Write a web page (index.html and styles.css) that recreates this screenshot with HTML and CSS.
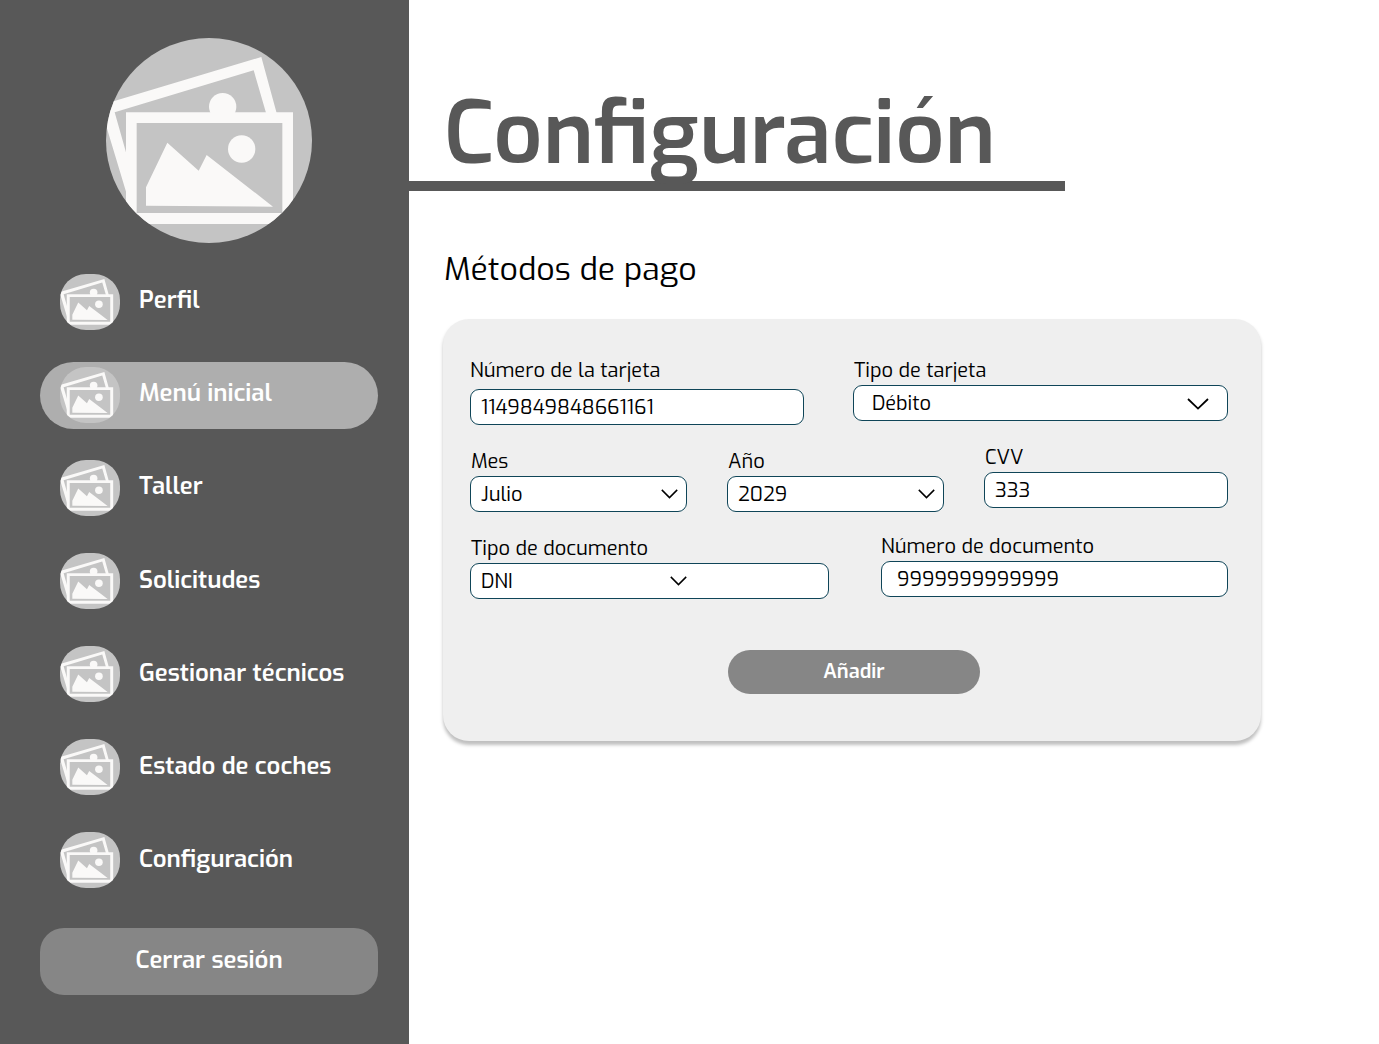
FILE: index.html
```html
<!DOCTYPE html>
<html lang="es">
<head>
<meta charset="utf-8">
<title>Configuración</title>
<link rel="stylesheet" href="styles.css">
</head>
<body>
<svg class="defs" aria-hidden="true">
  <symbol id="photo" viewBox="0 0 700 700" overflow="visible">
    <path class="paper" fill-rule="evenodd" d="M30 241 L514 96 L608 440 L130 573 Z M74 262 L150 530 L575 425 L491 136 Z"/>
    <circle class="paper" cx="398" cy="245" r="41"/>
    <path class="paper" d="M108 262H609V597H108Z"/>
    <path class="sky" d="M140 294H577V564H140Z"/>
    <circle class="paper" cx="455" cy="372" r="41"/>
    <path class="paper" d="M168 487L232 353L326 437L350 390L549 545L168 542Z"/>
  </symbol>
</svg>
<div class="page">
  <aside class="sidebar">
    <svg class="avatar" viewBox="48 39 618 615" preserveAspectRatio="none"><use href="#photo" width="700" height="700"/></svg>
    <nav class="menu">
      <a class="item"><svg class="icon" viewBox="35 42 653 611" preserveAspectRatio="none"><use href="#photo" width="700" height="700"/></svg><span>Perfil</span></a>
      <a class="item active"><svg class="icon" viewBox="35 42 653 611" preserveAspectRatio="none"><use href="#photo" width="700" height="700"/></svg><span>Menú inicial</span></a>
      <a class="item"><svg class="icon" viewBox="35 42 653 611" preserveAspectRatio="none"><use href="#photo" width="700" height="700"/></svg><span>Taller</span></a>
      <a class="item"><svg class="icon" viewBox="35 42 653 611" preserveAspectRatio="none"><use href="#photo" width="700" height="700"/></svg><span>Solicitudes</span></a>
      <a class="item"><svg class="icon" viewBox="35 42 653 611" preserveAspectRatio="none"><use href="#photo" width="700" height="700"/></svg><span>Gestionar técnicos</span></a>
      <a class="item"><svg class="icon" viewBox="35 42 653 611" preserveAspectRatio="none"><use href="#photo" width="700" height="700"/></svg><span>Estado de coches</span></a>
      <a class="item"><svg class="icon" viewBox="35 42 653 611" preserveAspectRatio="none"><use href="#photo" width="700" height="700"/></svg><span>Configuración</span></a>
    </nav>
    <button class="logout"><span>Cerrar sesión</span></button>
  </aside>
  <main class="content">
    <h1 class="title">Configuración</h1>
    <h2 class="subtitle">Métodos de pago</h2>
    <form class="card">
      <div class="row row-card">
        <div class="field number"><label>Número de la tarjeta</label><div class="box"><span>1149849848661161</span></div></div>
        <div class="field type"><label>Tipo de tarjeta</label><div class="box"><span>Débito</span><svg class="chevron large" viewBox="0 0 22 12"><path d="M1 1L11 10.6L21 1"/></svg></div></div>
      </div>
      <div class="row row-date">
        <div class="field month"><label>Mes</label><div class="box"><span>Julio</span><svg class="chevron" viewBox="0 0 17 10"><path d="M.8 .9L8.5 8.6L16.2 .9"/></svg></div></div>
        <div class="field year"><label>Año</label><div class="box"><span>2029</span><svg class="chevron" viewBox="0 0 17 10"><path d="M.8 .9L8.5 8.6L16.2 .9"/></svg></div></div>
        <div class="field cvv"><label>CVV</label><div class="box"><span>333</span></div></div>
      </div>
      <div class="row row-doc">
        <div class="field doctype"><label>Tipo de documento</label><div class="box"><span>DNI</span><svg class="chevron" viewBox="0 0 17 10"><path d="M.8 .9L8.5 8.6L16.2 .9"/></svg></div></div>
        <div class="field docnum"><label>Número de documento</label><div class="box"><span>9999999999999</span></div></div>
      </div>
      <button type="button" class="add"><span>Añadir</span></button>
    </form>
  </main>
</div>
</body>
</html>
```
FILE: styles.css
```css
* { box-sizing: border-box; }
body { margin: 0; background: #fff; color: #000; font-family: Exo, "Exo 2", Roboto, sans-serif; }
.defs { display: block; width: 0; height: 0; }
.paper { fill: #faf9f8; }
.sky { fill: #c4c4c4; }
.page { display: flex; height: 1044px; overflow: hidden; }

.sidebar { width: 409px; background: #585858; padding: 38px 31px 0 40px; display: flex; flex-direction: column; }
.avatar { display: block; width: 206px; height: 205px; margin-left: 66px; border-radius: 50%; background: #c4c4c4; }
.menu { display: flex; flex-direction: column; gap: 26px; margin-top: 26px; }
.item { display: flex; align-items: flex-start; height: 67px; padding: 5px 0 0 19.5px; border-radius: 33.5px; color: #fff; font-size: 24px; font-weight: 600; line-height: 28px; }
.item.active { background: #aeaeae; }
.item span { margin: 12px 0 0 19px; white-space: nowrap; }
.item:nth-child(n+4) span { margin-top: 13px; }
.icon { width: 60.5px; height: 56px; border-radius: 26px; background: #c4c4c4; flex: none; }
.logout { height: 67px; margin-top: 34px; padding: 0 0 3px; border: 0; border-radius: 24px; background: #868686; color: #fff; font: 600 24px/28px Exo, "Exo 2", Roboto, sans-serif; }

.content { flex: 1; min-width: 0; }
.title { margin: 0; width: 656px; height: 191px; padding: 82px 0 0 35px; border-bottom: 10px solid #585858; color: #585858; font-size: 86px; font-weight: 600; line-height: 104px; white-space: nowrap; }
.subtitle { margin: 58px 0 0 35px; font-size: 32px; font-weight: 400; line-height: 40px; }
.card { width: 818px; height: 422px; margin: 30px 0 0 34.4px; padding: 40px 33.4px 0 26.6px; border-radius: 26px; background: #efefef; box-shadow: 0 3.5px 3.5px rgba(0, 0, 0, .25); display: flex; flex-direction: column; }
.row { display: flex; justify-content: space-between; }
label { display: block; height: 26px; padding-left: 1px; font-size: 20px; line-height: 24px; white-space: nowrap; }
.box { height: 36px; padding: 2px 8px 0 10px; border: 1px solid #0f4558; border-radius: 9px; background: #fff; display: flex; align-items: center; justify-content: space-between; font-size: 20px; line-height: 24px; }
.chevron { width: 17px; height: 10px; margin-bottom: 1.5px; fill: none; stroke: #000; stroke-width: 1.5; flex: none; }
.chevron.large { width: 22px; height: 12px; margin-bottom: 1px; stroke-width: 1.8; }
.number { width: 334px; }
.number label { height: 30px; padding-left: 0; }
.type { width: 375px; }
.type .box { padding: 2px 18px 0 18px; }
.row-date { margin-top: 21px; }
.month, .year { width: 217px; padding-top: 4px; }
.cvv { width: 244px; }
.row-doc { margin-top: 23px; }
.doctype { width: 359px; padding-top: 2px; }
.doctype .box { padding-right: 141px; }
.docnum { width: 347px; }
.docnum label { padding-left: 0; }
.docnum .box { padding-left: 15px; }
.add { width: 252px; height: 44px; margin: 51px 0 0 258px; padding: 0; border: 0; border-radius: 22px; background: #868686; color: #fff; font: 600 20px/24px Exo, "Exo 2", Roboto, sans-serif; }
```
